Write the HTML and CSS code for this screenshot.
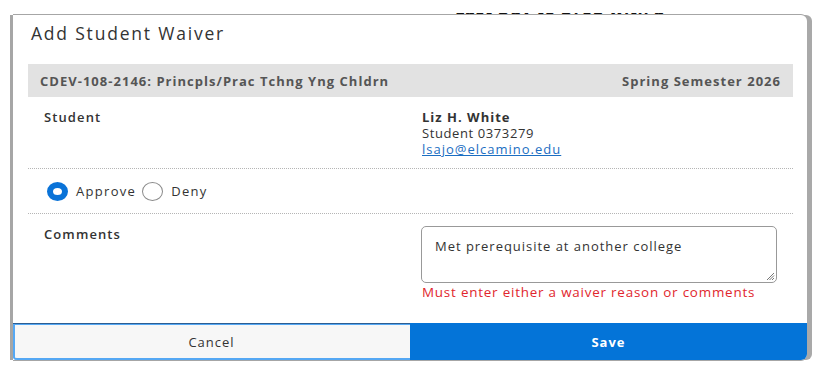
FILE: index.html
```html
<!DOCTYPE html>
<html lang="en">
<head>
<meta charset="utf-8">
<title>Add Student Waiver</title>
<link rel="stylesheet" href="styles.css">
</head>
<body>
<div class="page">
  <div class="behind"><span>Last Day to Drop with a Grade</span></div>
  <div class="modal">
    <div class="modal-header">
      <h1 class="modal-title">Add Student Waiver</h1>
    </div>
    <div class="modal-body">
      <div class="course-bar">
        <span>CDEV-108-2146: Princpls/Prac Tchng Yng Chldrn</span>
        <span class="term">Spring Semester 2026</span>
      </div>
      <div class="row row-student">
        <div class="label">Student</div>
        <div class="value">
          <div class="name">Liz H. White</div>
          <div class="sid">Student 0373279</div>
          <a class="email" href="#">lsajo@elcamino.edu</a>
        </div>
      </div>
      <div class="row row-radio">
        <label class="radio"><span class="dot checked"></span>Approve</label>
        <label class="radio"><span class="dot"></span>Deny</label>
      </div>
      <div class="row row-comments">
        <div class="label">Comments</div>
        <div class="value">
          <div class="textarea">Met prerequisite at another college
            <svg class="grip" width="10" height="10" viewBox="0 0 10 10"><path d="M9 2 L2 9 M9 4.5 L4.5 9 M9 7 L7 9" stroke="#777" stroke-width="1"/></svg>
          </div>
          <div class="error">Must enter either a waiver reason or comments</div>
        </div>
      </div>
    </div>
    <div class="modal-footer">
      <button class="btn btn-cancel">Cancel</button>
      <button class="btn btn-save">Save</button>
    </div>
  </div>
</div>
</body>
</html>
```
FILE: styles.css
```css
* { box-sizing: border-box; }
html, body { margin: 0; padding: 0; background: #fff; }
body {
  font-family: "Open Sans", "Noto Sans", sans-serif;
  color: #333;
  font-size: 13px;
  width: 815px;
  height: 368px;
  overflow: hidden;
}
.page {
  position: relative;
  padding: 15px 0 0 13px;
  height: 368px;
}
.behind {
  position: absolute;
  left: 455px;
  top: 13px;
  height: 2px;
  width: 230px;
  overflow: hidden;
  font-size: 17px;
  font-weight: 700;
  color: #111;
  letter-spacing: 0.5px;
  line-height: 20px;
}
.behind span { display: block; margin-top: -14px; }
.modal {
  position: relative;
  width: 794px;
  height: 345px;
  background: #fff;
  border-radius: 0 6px 6px 0;
  box-shadow: -3px 0 0 #a6a6a6, 0 -1px 0 #a6a6a6, 5px 0 0 #a9a9a9, 0 1px 0 #a6a6a6;
  display: flex;
  flex-direction: column;
}
.modal-header {
  height: 49px;
  padding: 6px 0 0 18px;
}
.modal-title {
  margin: 0;
  font-size: 17.5px;
  line-height: 24px;
  font-weight: 400;
  color: #333;
  letter-spacing: 1.8px;
}
.modal-body {
  padding: 0 14px 0 15px;
  flex: 1;
}
.course-bar {
  height: 33px;
  background: #e2e2e2;
  display: flex;
  justify-content: space-between;
  align-items: center;
  padding: 0 12px;
  font-weight: 700;
  color: #555;
  font-size: 13px;
  letter-spacing: 1.02px;
}
.row {
  display: grid;
  grid-template-columns: 394px 1fr;
  border-bottom: 1px dotted #b5b5b5;
}
.label {
  padding-left: 16px;
  font-weight: 600;
  line-height: 16px;
  color: #333;
  letter-spacing: 1.1px;
}
.value { line-height: 16px; letter-spacing: 0.9px; }
.row-student { padding: 12px 0 11px; }
.name { font-weight: 700; letter-spacing: 1px; }
.sid { letter-spacing: 0.6px; }
.email { color: #1b6ec2; text-decoration: underline; letter-spacing: 1px; }
.row-radio {
  display: flex;
  align-items: center;
  padding: 12px 0 12px 19px;
  height: 45px;
  gap: 6px;
}
.radio {
  display: flex;
  align-items: center;
  gap: 8px;
  line-height: 19px;
  letter-spacing: 1.3px;
}
.dot {
  width: 21px;
  height: 19px;
  border-radius: 50%;
  border: 1px solid #8a8a8a;
  background: #fff;
}
.dot.checked {
  border: 6px solid #0a73d8;
}
.row-comments {
  border-bottom: none;
  padding-top: 12px;
}
.textarea {
  position: relative;
  width: 356px;
  height: 57px;
  margin-left: -1px;
  border: 1px solid #999;
  border-radius: 5px;
  padding: 10px 13px;
  color: #333;
  line-height: 18px;
  letter-spacing: 0.97px;
}
.grip {
  position: absolute;
  right: 1px;
  bottom: 1px;
}
.error {
  color: #e1262d;
  font-size: 13.4px;
  line-height: 18px;
  letter-spacing: 0.8px;
}
.modal-footer {
  display: flex;
  height: 37px;
}
.btn {
  flex: 1;
  border: none;
  margin: 0;
  font-family: inherit;
  font-size: 13px;
  cursor: pointer;
}
.btn-cancel {
  background: #f7f7f7;
  color: #333;
  border-top: 1px solid #2c5e93;
  box-shadow: inset 2px 1px 0 #55a8f4, inset 0 -2px 0 #55a8f4;
  border-radius: 0 0 0 4px;
  letter-spacing: 1px;
}
.btn-save {
  background: #0474d8;
  color: #fff;
  font-weight: 700;
  border-radius: 0 0 6px 0;
  letter-spacing: 1px;
}
```
